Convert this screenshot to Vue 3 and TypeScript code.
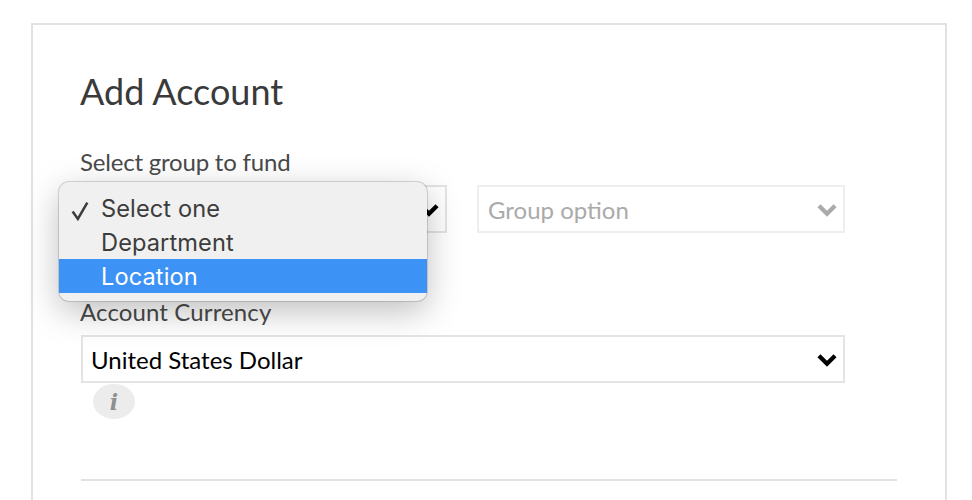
<script setup lang="ts">
const options: { label: string; checked?: boolean; active?: boolean }[] = [
  { label: 'Select one', checked: true },
  { label: 'Department' },
  { label: 'Location', active: true },
]
</script>

<template>
  <div class="page">
    <section class="card">
      <h1 class="title">Add Account</h1>
      <div class="label first">Select group to fund</div>
      <div class="group-row">
        <div class="select-wrap">
          <div class="select">
            <svg class="chev chev-black" viewBox="0 0 20 14" aria-hidden="true"><path d="M2.500 3.500 10 11l7.500-7.500" /></svg>
          </div>
          <div class="menu">
            <div v-for="o in options" :key="o.label" class="opt" :class="{ active: o.active }">
              <svg v-if="o.checked" class="tick" viewBox="0 0 20 20" aria-hidden="true"><path d="M2.500 11 7.500 18 16.500 2.500" /></svg>
              {{ o.label }}
            </div>
          </div>
        </div>
        <div class="select disabled">
          <span class="value">Group option</span>
          <svg class="chev chev-grey" viewBox="0 0 20 14" aria-hidden="true"><path d="M2.500 3.500 10 11l7.500-7.500" /></svg>
        </div>
      </div>
      <div class="label second">Account Currency</div>
      <div class="select full">
        <span class="value">United States Dollar</span>
        <svg class="chev chev-black" viewBox="0 0 20 14" aria-hidden="true"><path d="M2.500 3.500 10 11l7.500-7.500" /></svg>
      </div>
      <div class="info"><span>i</span></div>
      <hr class="rule" />
    </section>
  </div>
</template>

<style>
html, body { margin: 0; background: #fff; overflow: hidden; }
</style>

<style scoped>
.page {
  width: 972px;
  height: 500px;
  overflow: hidden;
  box-sizing: border-box;
  padding: 23px 25px 0 31px;
  font-family: Lato, "Open Sans", sans-serif;
}
.card {
  box-sizing: border-box;
  height: 600px;
  border: 2px solid #e2e2e2;
  padding: 40px 48px 0 47px;
}
.title {
  margin: 0;
  font-size: 36px;
  font-weight: 400;
  line-height: 52px;
  color: #3a3a3a;
}
.label {
  font-size: 24px;
  line-height: 30px;
  color: #4a4a4a;
}
.first { margin-top: 30px; letter-spacing: -0.2px; }
.second { margin-top: 64px; letter-spacing: 0.12px; }
.group-row {
  display: flex;
  gap: 30px;
  margin-top: 8px;
  margin-left: 1px;
}
.select-wrap {
  position: relative;
  width: 366px;
}
.select {
  box-sizing: border-box;
  height: 48px;
  border: 2px solid #e4e4e4;
  display: flex;
  align-items: center;
  justify-content: space-between;
  padding: 0 5px 0 8px;
  background: #fff;
}
.select-wrap .select { justify-content: flex-end; }
.disabled {
  width: 368px;
  border-color: #eeeeee;
  padding-left: 9px;
}
.full {
  margin: 8px 0 0 1px;
  width: 764px;
}
.value {
  font-size: 24px;
  color: #000;
}
.disabled .value { color: #aaa; }
.chev {
  width: 22px;
  height: 15px;
  flex: none;
  fill: none;
  stroke-width: 4px;
}
.chev-black { stroke: #000; }
.chev-grey { stroke: #aaa; }
.menu {
  position: absolute;
  left: -22px;
  top: -3px;
  width: 368px;
  height: 119px;
  box-sizing: border-box;
  padding-top: 9px;
  background: #f0f0f0;
  border-radius: 10px;
  box-shadow: 0 0 0 1px rgba(0, 0, 0, 0.14), 0 10px 34px rgba(0, 0, 0, 0.26);
  font-family: Inter, Roboto, sans-serif;
  font-size: 23.600px;
  letter-spacing: 0.1px;
  color: #3c3c3c;
}
.opt {
  position: relative;
  box-sizing: border-box;
  height: 34px;
  padding: 1px 0 0 42px;
  line-height: 34px;
}
.active {
  background: #3d92f5;
  color: #fff;
}
.tick {
  position: absolute;
  left: 11px;
  top: 9px;
  width: 21px;
  height: 21px;
  fill: none;
  stroke: #3c3c3c;
  stroke-width: 2.400px;
}
.info {
  width: 42px;
  height: 35px;
  margin: 1px 0 0 13px;
  border-radius: 50%;
  background: #ececec;
  display: flex;
  align-items: center;
  justify-content: center;
  color: #8f8f8f;
  font-family: "DejaVu Serif", serif;
  font-style: italic;
  font-weight: 700;
  font-size: 22px;
}
.rule {
  margin: 60px 0 0 1px;
  border: 0;
  height: 2px;
  background: #e2e2e2;
}
</style>
